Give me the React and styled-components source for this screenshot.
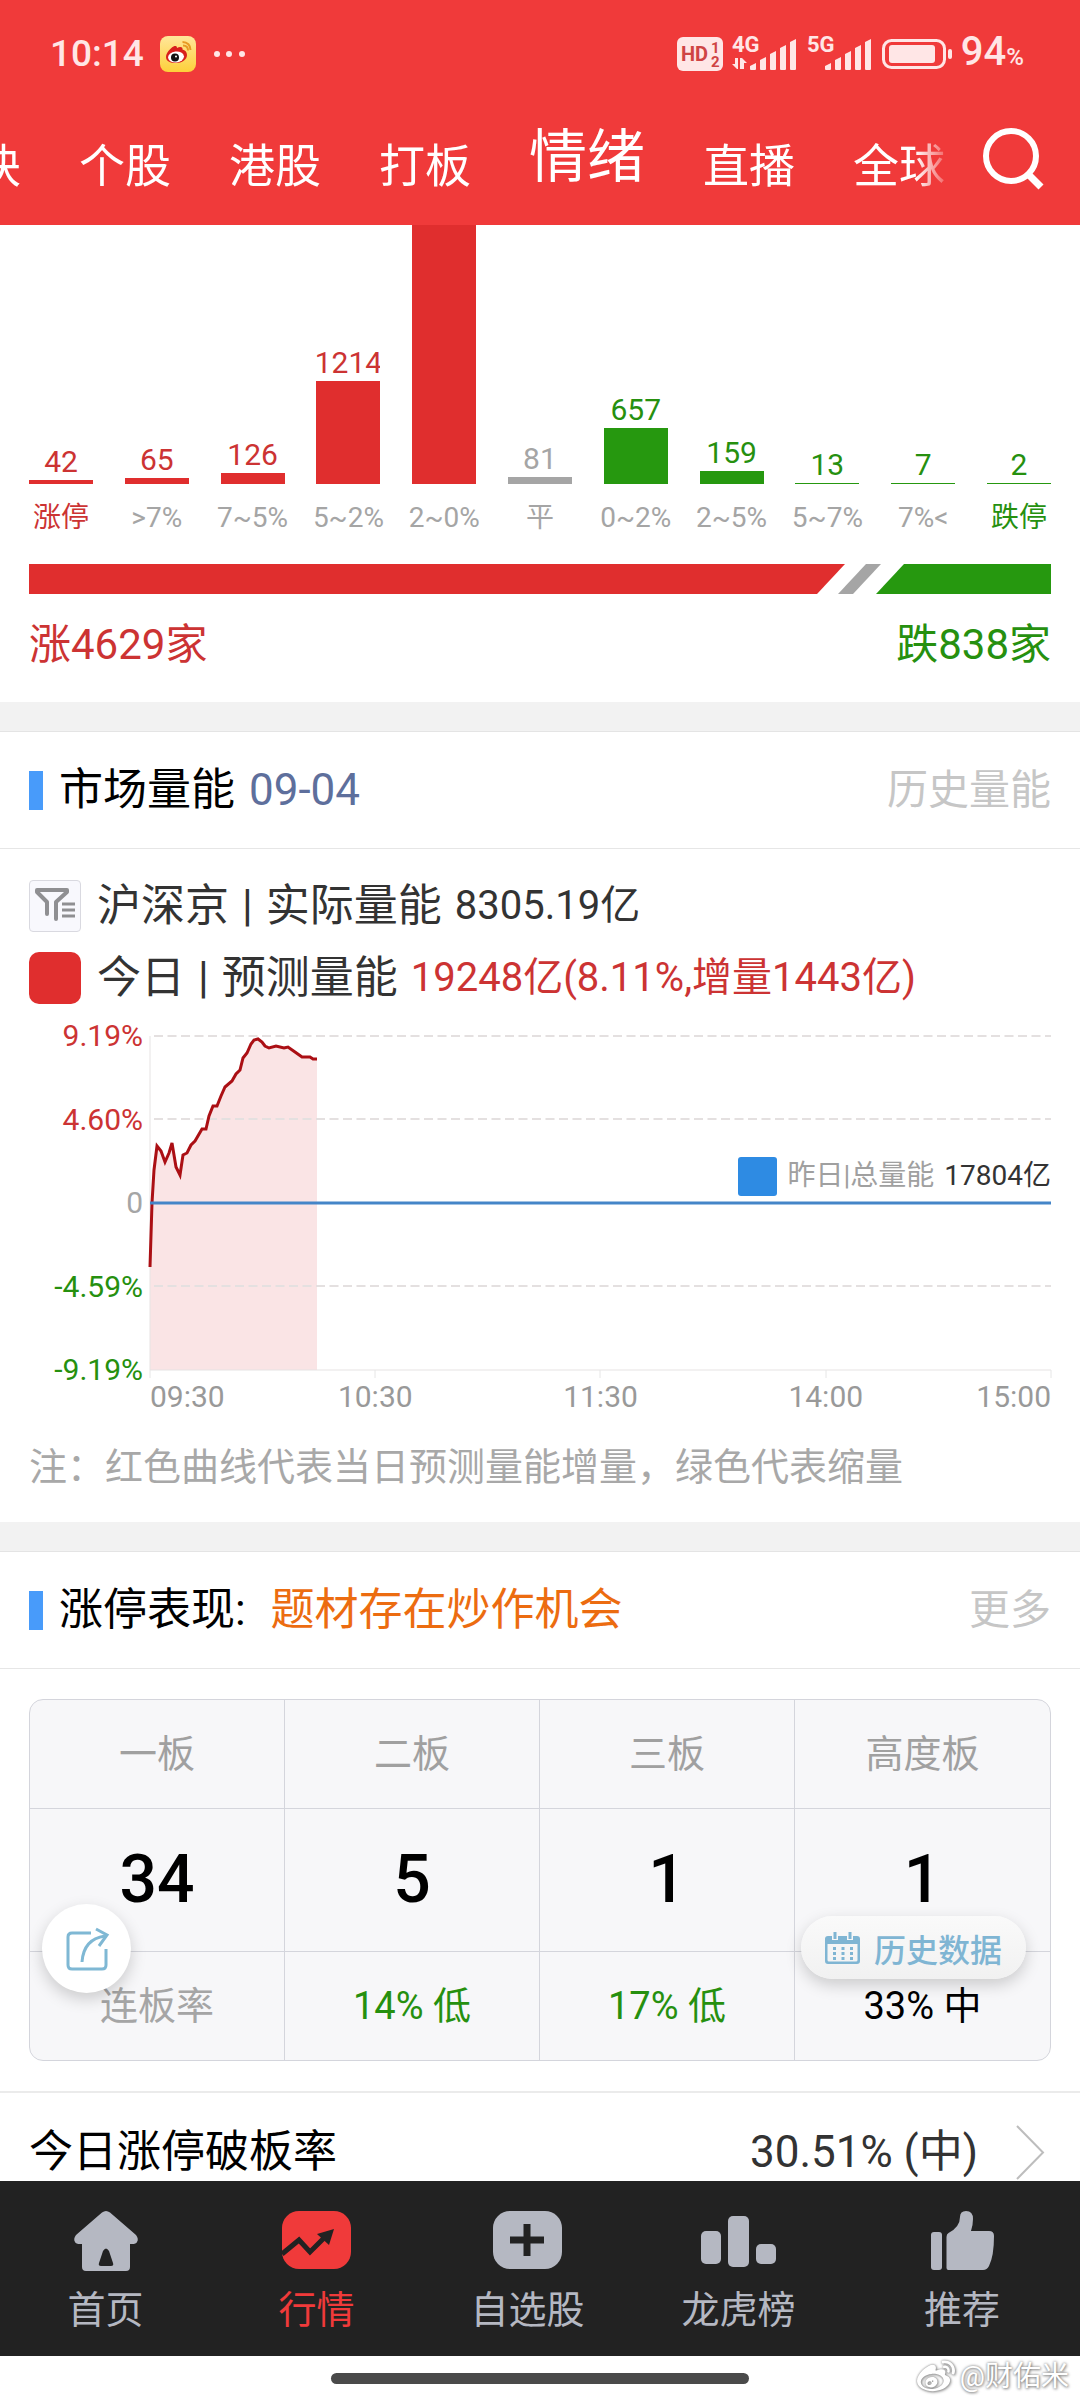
import styled, { createGlobalStyle, css } from "styled-components";
import { FaWeibo } from "react-icons/fa";

const RED = "#e02e2e";
const GREEN = "#26980f";
const GREY = "#a5a5a5";

const GlobalStyle = createGlobalStyle`
  * {
    box-sizing: border-box;
  }
  body {
    margin: 0;
    background: #fff;
    font-family: Roboto, "Noto Sans CJK SC", sans-serif;
    color: #000;
  }
  a {
    color: inherit;
    text-decoration: none;
  }
  button {
    border: none;
    padding: 0;
    background: none;
    font: inherit;
    cursor: pointer;
  }
  svg {
    display: block;
    flex: none;
    overflow: visible;
  }
`;

const toneColor = {
  up: "#cc3333",
  down: "#26900f",
  flat: GREY,
  plain: "#000",
};

const Screen = styled.div`
  height: 100vh;
  display: flex;
  flex-direction: column;
  overflow: hidden;
`;

/* ---------- header ---------- */

const Header = styled.header`
  flex: none;
  background: #f03a3a;
  color: #fff;
`;

const StatusBar = styled.div`
  height: 108px;
  padding: 0 56px 0 50px;
  display: flex;
  align-items: center;
  justify-content: space-between;
  color: #ffe6e6;
`;

const StatusGroup = styled.div`
  display: flex;
  align-items: center;
  gap: ${({ $gap }) => $gap}px;
`;

const Clock = styled.span`
  font-size: 37px;
  line-height: 48px;
  font-weight: 500;
`;

const BatteryLevel = styled.span`
  font-size: 40px;
  line-height: 48px;
  font-weight: 500;

  small {
    font-size: 24px;
  }
`;

const StatusLabel = styled.text`
  font-family: Roboto, sans-serif;
  font-weight: 700;
`;

const TabRow = styled.div`
  height: 117px;
  padding: 0 36px 26px 0;
  display: flex;
  align-items: flex-end;
  gap: 28px;
`;

const TabStrip = styled.nav`
  flex: 1;
  min-width: 0;
  overflow: hidden;
  mask-image: linear-gradient(to right, #000 calc(100% - 40px), transparent);
`;

const TabList = styled.div`
  display: flex;
  align-items: flex-end;
  gap: 58px;
  margin-left: -71px;
`;

const Tab = styled.a`
  flex: none;
  font-size: ${({ $active }) => ($active ? 58 : 46)}px;
  line-height: ${({ $active }) => ($active ? 84 : 66)}px;
`;

const SearchButton = styled.button`
  margin-bottom: 10px;
`;

/* ---------- shared section parts ---------- */

const Main = styled.main`
  flex: 1;
  min-height: 0;
  overflow: hidden;
`;

const Band = styled.div`
  height: 30px;
  background: #f2f2f2;
  border-bottom: 1px solid #e4e4e4;
`;

const SectionHeader = styled.div`
  height: 117px;
  padding: 0 29px;
  display: flex;
  align-items: center;
  gap: 14px;
  border-bottom: 1px solid #e6e6e6;
  font-size: 44px;
  line-height: 64px;

  &::before {
    content: "";
    width: 14px;
    height: 39px;
    margin-right: 2px;
    background: #489bfa;
  }
`;

const SectionTitle = styled.h2`
  margin: 0;
  font-size: inherit;
  font-weight: 400;
`;

const SectionNote = styled.span`
  color: ${({ $color }) => $color};
`;

const MoreLink = styled.a`
  margin-left: auto;
  font-size: 41px;
  color: #c6c6c6;
`;

/* ---------- rise / fall distribution ---------- */

const Distribution = styled.section`
  padding: 0 29px 25px;
`;

const Columns = styled.div`
  display: flex;
  justify-content: space-between;
`;

const Column = styled.div`
  width: 64px;
  display: flex;
  flex-direction: column;
  align-items: center;
  white-space: nowrap;
`;

const ColumnPlot = styled.div`
  width: 100%;
  height: 259px;
  display: flex;
  flex-direction: column;
  justify-content: flex-end;
  align-items: center;
  overflow: hidden;
`;

const ColumnCount = styled.span`
  font-size: 30px;
  line-height: 36px;
  color: ${({ $tone }) => toneColor[$tone]};
`;

const ColumnBar = styled.div`
  flex: none;
  width: 100%;
  background: ${({ $tone }) => ({ up: RED, down: GREEN, flat: GREY })[$tone]};
`;

const ColumnName = styled.span`
  margin-top: 12px;
  font-size: 28px;
  line-height: 44px;
  color: ${({ $tone }) => toneColor[$tone]};
`;

const RatioBar = styled.div`
  height: 30px;
  margin-top: 24px;
  display: flex;
`;

const RatioUp = styled.div`
  flex: 816;
  background: ${RED};
  clip-path: polygon(0 0, 100% 0, calc(100% - 28px) 100%, 0 100%);
`;

const RatioFlat = styled.div`
  width: 43px;
  margin: 0 -5px 0 -7px;
  background: ${GREY};
  clip-path: polygon(28px 0, 100% 0, calc(100% - 28px) 100%, 0 100%);
`;

const RatioDown = styled.div`
  flex: 175;
  background: ${GREEN};
  clip-path: polygon(28px 0, 100% 0, 100% 100%, 0 100%);
`;

const Totals = styled.div`
  margin-top: 19px;
  display: flex;
  justify-content: space-between;
  font-size: 42px;
  line-height: 64px;
`;

const Total = styled.span`
  color: ${({ $tone }) => toneColor[$tone]};
`;

/* ---------- market volume ---------- */

const Volume = styled.section`
  padding: 25px 29px 27px;
`;

const VolumeRows = styled.div`
  display: flex;
  flex-direction: column;
  gap: 8px;
`;

const VolumeRow = styled.div`
  display: flex;
  align-items: center;
  gap: 13px;
  font-size: 44px;
  line-height: 64px;
  color: #333;
`;

const VolumeValue = styled.span`
  font-size: 40px;
  color: ${({ $tone }) => ($tone ? toneColor[$tone] : "#333")};
`;

const iconBox = css`
  flex: none;
  width: 52px;
  height: 52px;
  margin-right: 3px;
`;

const FilterButton = styled.button`
  ${iconBox}
  border: 1px solid #d9d9e0;
  border-radius: 4px;
  background: #f8f8fd;
`;

const TodaySwatch = styled.span`
  ${iconBox}
  border-radius: 10px;
  background: ${RED};
`;

const VolumeChart = styled.div`
  margin-top: 26px;
  display: grid;
  grid-template-columns: 114px 1fr;
  column-gap: 7px;
`;

const YAxis = styled.div`
  margin: -18px 0;
  display: flex;
  flex-direction: column;
  justify-content: space-between;
  align-items: flex-end;
  font-size: 30px;
  line-height: 36px;
`;

const YLabel = styled.span`
  color: ${({ $tone }) => toneColor[$tone]};
`;

const Plot = styled.div`
  position: relative;
  height: 334px;

  svg {
    width: 100%;
    height: 100%;
  }
`;

const Legend = styled.div`
  position: absolute;
  right: 0;
  top: 118px;
  display: flex;
  align-items: center;
  font-size: 28px;
  line-height: 44px;
  color: #a0a0a0;
`;

const LegendSwatch = styled.span`
  width: 39px;
  height: 39px;
  margin-right: 10px;
  border-radius: 3px;
  background: #2e8be3;
`;

const LegendValue = styled.span`
  margin-left: 10px;
  color: #333;
`;

const XAxis = styled.div`
  grid-column: 2;
  margin-top: 9px;
  display: grid;
  grid-template-columns: 1fr 2fr 2fr 2fr 1fr;
  font-size: 30px;
  line-height: 36px;
  color: #999;
  text-align: center;

  span:first-child {
    text-align: left;
  }
  span:last-child {
    text-align: right;
  }
`;

const Footnote = styled.p`
  margin: 24px 0 0;
  font-size: 38px;
  line-height: 56px;
  color: #a8a8a8;
`;

/* ---------- limit-up table ---------- */

const Boards = styled.section`
  position: relative;
  padding: 30px 29px;
`;

const BoardFrame = styled.div`
  border: 1px solid #d4d5dc;
  border-radius: 14px;
  background: #f7f7f9;
  overflow: hidden;
`;

const BoardTable = styled.table`
  width: 100%;
  table-layout: fixed;
  border-spacing: 0;
  font-size: 38px;
  line-height: 56px;
  text-align: center;

  th,
  td {
    padding: 0;
    font-weight: 400;
    border-right: 1px solid #d4d5dc;
    border-bottom: 1px solid #d4d5dc;
  }
  tr > :last-child {
    border-right: none;
  }
  tbody tr:last-child > * {
    border-bottom: none;
  }
`;

const BoardName = styled.th`
  height: 109px;
  color: #a0a0a0;
`;

const BoardCount = styled.td`
  height: 143px;
  font-size: 66px;
  line-height: 80px;

  span {
    font-weight: 500;
  }
`;

const BoardRate = styled.td`
  height: 108px;
  color: ${({ $tone }) => toneColor[$tone]};
`;

const floating = css`
  position: absolute;
  display: flex;
  align-items: center;
  justify-content: center;
  box-shadow: 0 6px 16px rgba(0, 0, 0, 0.18);
`;

const ShareButton = styled.button`
  ${floating}
  left: 42px;
  bottom: 98px;
  width: 89px;
  height: 89px;
  border-radius: 50%;
  background: #fff;
`;

const HistoryButton = styled.button`
  ${floating}
  right: 54px;
  bottom: 112px;
  height: 63px;
  padding: 0 24px;
  gap: 14px;
  border-radius: 32px;
  background: linear-gradient(#fafafa, #f1f1f1);
  font-size: 32px;
  font-weight: 500;
  color: #7fb5d3;
`;

const RateRow = styled.a`
  height: 120px;
  padding: 0 35px 0 29px;
  display: flex;
  align-items: center;
  border-top: 2px solid #ebebeb;
  font-size: 44px;
  line-height: 56px;
`;

const RateValue = styled.span`
  margin-left: auto;
  margin-right: 38px;
  color: #333;
`;

/* ---------- bottom ---------- */

const BottomNav = styled.nav`
  flex: none;
  height: 175px;
  padding-top: 30px;
  display: grid;
  grid-template-columns: 211fr 211fr 211fr 211fr 236fr;
  background: #222;
`;

const NavItem = styled.a`
  display: flex;
  flex-direction: column;
  align-items: center;
  gap: 11px;
  font-size: 38px;
  line-height: 56px;
  color: ${({ $active }) => ($active ? "#f03a3a" : "#b5b8c2")};
`;

const GestureArea = styled.footer`
  position: relative;
  flex: none;
  height: 44px;
  display: flex;
  align-items: center;
  justify-content: center;
  background: #fff;
`;

const GestureBar = styled.div`
  width: 418px;
  height: 11px;
  border-radius: 6px;
  background: #4a4a4a;
`;

const Watermark = styled.div`
  position: absolute;
  right: 11px;
  top: 0;
  display: flex;
  align-items: center;
  gap: 5px;
  font-size: 28px;
  line-height: 42px;
  color: #fff;
  text-shadow: 0 0 3px #777, 1px 1px 3px #999;

  svg {
    filter: drop-shadow(0 0 1px #888) drop-shadow(1px 1px 1px #aaa);
  }
`;

/* ---------- icons ---------- */

function WeiboBadge() {
  return (
    <svg width="36" height="36" viewBox="0 0 36 36">
      <defs>
        <linearGradient id="badge" x1="0" y1="0" x2="0" y2="1">
          <stop offset="0" stopColor="#ffe79a" />
          <stop offset="1" stopColor="#fdd03a" />
        </linearGradient>
      </defs>
      <rect width="36" height="36" rx="8" fill="url(#badge)" />
      <path d="M6 21c0-4 4-8.500 7.500-10.500 2-1 3.500-.5 3.500 1.500 2.500-1.500 6-1.500 5.500 1.500 2.500.5 4.500 2.500 4.500 5.500 0 4.500-5 8-11 8S6 25 6 21z" fill="#d8201c" />
      <ellipse cx="16" cy="21" rx="8" ry="5.500" fill="#fff" transform="rotate(-6 16 21)" />
      <circle cx="15" cy="21.500" r="4" fill="#111" />
      <circle cx="16" cy="20.500" r="1" fill="#fff" />
      <path d="M23 9.500c3 0 5 2 5 5M22.500 6c5 0 8 3.500 8 8" fill="none" stroke="#e79a24" strokeWidth="2" />
    </svg>
  );
}

function HdIcon() {
  return (
    <svg width="46" height="34" viewBox="0 0 46 34">
      <rect width="46" height="34" rx="6" fill="currentColor" />
      <g fill="#cf4444">
        <StatusLabel x="4" y="24" fontSize="20">HD</StatusLabel>
        <StatusLabel x="34" y="16" fontSize="15">1</StatusLabel>
        <StatusLabel x="34" y="30" fontSize="15">2</StatusLabel>
      </g>
    </svg>
  );
}

function Signal({ label, arrows }) {
  return (
    <svg width="66" height="34" viewBox="0 0 66 34" fill="currentColor">
      <StatusLabel x="0" y="15" fontSize="22">{label}</StatusLabel>
      {arrows && <path d="M3 21h3v11H5l-5-5h3zM8 32V21h2l5 5h-3v6z" />}
      {[7, 13, 19, 25, 31].map((h, i) => (
        <path key={h} d={`M${18 + i * 10} 33v${3 - h}l6 -3v${h - 1}q0 1 -1 1h-4q-1 0 -1 -1z`} />
      ))}
    </svg>
  );
}

function Battery() {
  return (
    <svg width="70" height="30" viewBox="0 0 70 30">
      <rect x="1.500" y="1.500" width="61" height="27" rx="8" fill="none" stroke="currentColor" strokeWidth="3" />
      <rect x="7" y="6" width="46" height="18" rx="3" fill="currentColor" />
      <rect x="66" y="10" width="4" height="10" rx="2" fill="currentColor" />
    </svg>
  );
}

function SearchIcon() {
  return (
    <svg width="61" height="61" viewBox="0 0 61 61" fill="none" stroke="#fff" strokeWidth="6">
      <circle cx="28" cy="28" r="25" />
      <path d="M45 46l13 13" strokeWidth="7" />
    </svg>
  );
}

function FilterIcon() {
  return (
    <svg width="50" height="50" viewBox="0 0 50 50" fill="none" stroke="#8f8f92" strokeWidth="4">
      <path d="M17 33V21L7 11V9h30v2L26 21v17" strokeLinejoin="round" strokeLinecap="round" />
      <path d="M32 23h13M32 29h13M32 35h13" strokeWidth="3" />
    </svg>
  );
}

function ShareIcon() {
  return (
    <svg width="42" height="44" viewBox="0 0 42 44" fill="none" stroke="#7fb8d4" strokeWidth="3">
      <path d="M25 6H6q-4 0-4 4v28q0 4 4 4h30q4 0 4-4V22" />
      <path d="M16 35C17 20 25 11 39 9" />
      <path d="M30 2l11 6-8 11" />
    </svg>
  );
}

function CalendarIcon() {
  return (
    <svg width="35" height="32" viewBox="0 0 35 32">
      <path d="M3 4h29q3 0 3 3v22q0 3-3 3H3q-3 0-3-3V7q0-3 3-3zM2.500 12v16q0 1.500 1.500 1.500h27q1.500 0 1.500-1.500V12z" fill="currentColor" fillRule="evenodd" />
      <path d="M10 0v8M25 0v8" stroke="#f7f7f7" strokeWidth="6" />
      <path d="M10 0v7M25 0v7" stroke="currentColor" strokeWidth="3" />
      <path d="M8 16.500h20M8 21.500h20M8 26.500h20" stroke="currentColor" strokeWidth="3" strokeDasharray="3 5.500" />
    </svg>
  );
}

function HomeIcon() {
  return (
    <svg width="64" height="60" viewBox="0 0 64 60" fill="currentColor" fillRule="evenodd">
      <path d="M28 1.500q4-3 8 0L62 24q3 4 1 7-1 2-5 2h-2v23q0 4-4 4H12q-4 0-4-4V33H6q-4 0-5-2-2-3 1-7zM29 40l-4 12q-1 3 2 3h10q3 0 2-3l-4-12q-3-5-6 0z" />
    </svg>
  );
}

function MarketIcon() {
  return (
    <svg width="69" height="60" viewBox="0 0 69 60">
      <rect width="69" height="58" rx="17" fill="currentColor" />
      <path d="M0 43l17-14 11 12 14-14" fill="none" stroke="#222" strokeWidth="5" />
      <path d="M52 18L35 23l12 11z" fill="#222" />
    </svg>
  );
}

function AddIcon() {
  return (
    <svg width="69" height="60" viewBox="0 0 69 60">
      <rect width="69" height="58" rx="17" fill="currentColor" />
      <path d="M17 29h34M34 13v32" stroke="#222" strokeWidth="7" />
    </svg>
  );
}

function RankIcon() {
  return (
    <svg width="75" height="60" viewBox="0 0 75 60" fill="currentColor">
      <rect x="0" y="20" width="20" height="33" rx="5" />
      <rect x="27" y="5" width="21" height="51" rx="5" />
      <rect x="55" y="33" width="20" height="20" rx="5" />
    </svg>
  );
}

function ThumbIcon() {
  return (
    <svg width="63" height="60" viewBox="0 0 63 60" fill="currentColor">
      <rect x="0" y="21" width="11" height="38" rx="3" />
      <path d="M15.500 26q0-3 2-4Q29 16 29 6q0-6 6-6 7 0 7 8 0 6-2 12h18q5 0 5 5 0 20-5 30-2 4-6 4H17.500q-2 0-2-2z" />
    </svg>
  );
}

function Chevron() {
  return (
    <svg width="29" height="55" viewBox="0 0 29 55" fill="none" stroke="#bdbdbd" strokeWidth="2">
      <path d="M1 1l26 26.500L1 54" />
    </svg>
  );
}

/* ---------- data ---------- */

const tabs = ["板块", "个股", "港股", "打板", "情绪", "直播", "全球"];

const columns = [
  { name: "涨停", count: 42, height: 4, tone: "up", strong: true },
  { name: ">7%", count: 65, height: 6, tone: "up" },
  { name: "7~5%", count: 126, height: 11, tone: "up" },
  { name: "5~2%", count: 1214, height: 103, tone: "up" },
  { name: "2~0%", height: 270, tone: "up" },
  { name: "平", count: 81, height: 7, tone: "flat" },
  { name: "0~2%", count: 657, height: 56, tone: "down" },
  { name: "2~5%", count: 159, height: 13, tone: "down" },
  { name: "5~7%", count: 13, height: 1, tone: "down" },
  { name: "7%<", count: 7, height: 1, tone: "down" },
  { name: "跌停", count: 2, height: 1, tone: "down", strong: true },
];

const yLabels = [
  { text: "9.19%", tone: "up" },
  { text: "4.60%", tone: "up" },
  { text: "0", tone: "flat" },
  { text: "-4.59%", tone: "down" },
  { text: "-9.19%", tone: "down" },
];

const times = ["09:30", "10:30", "11:30", "14:00", "15:00"];

// predicted volume change, in plot coordinates (901 x 334)
const trend = [
  [0, 231], [2, 167], [4, 134], [7, 110], [11, 115], [15, 126], [19, 117],
  [22, 107], [26, 131], [30, 139], [33, 119], [37, 117], [41, 109], [45, 105],
  [52, 93], [56, 93], [59, 80], [63, 70], [67, 70], [71, 60], [75, 51],
  [82, 45], [86, 38], [90, 34], [93, 22], [97, 17], [101, 8], [104, 4],
  [108, 3], [112, 6], [115, 10], [119, 12], [126, 10], [134, 12], [138, 11],
  [145, 16], [152, 21], [160, 21], [163, 23], [167, 23],
];

const boards = [
  { name: "一板", count: 34, rate: "连板率", tone: "flat" },
  { name: "二板", count: 5, rate: "14% 低", tone: "down" },
  { name: "三板", count: 1, rate: "17% 低", tone: "down" },
  { name: "高度板", count: 1, rate: "33% 中", tone: "plain" },
];

const navItems = [
  { name: "首页", Icon: HomeIcon },
  { name: "行情", Icon: MarketIcon, active: true },
  { name: "自选股", Icon: AddIcon },
  { name: "龙虎榜", Icon: RankIcon },
  { name: "推荐", Icon: ThumbIcon },
];

function TrendPlot() {
  const line = trend.map((p) => p.join(",")).join(" ");
  return (
    <svg viewBox="0 0 901 334" preserveAspectRatio="none">
      <polygon points={`0,334 ${line} 167,334`} fill="#df3d46" fillOpacity="0.14" />
      <g stroke="#e4e0e0" strokeWidth="2" strokeDasharray="9 4.500">
        {[0, 83, 250].map((y) => (
          <line key={y} x1="4" x2="901" y1={y} y2={y} />
        ))}
      </g>
      <path d="M0 0V334H901" fill="none" stroke="#e6e3e3" strokeWidth="1" />
      {[0, 225, 450, 676, 901].map((x) => (
        <line key={x} x1={x} x2={x} y1="334" y2="342" stroke="#e6e6e6" />
      ))}
      <polyline points={line} fill="none" stroke="#ab0f14" strokeWidth="3" />
      <line x1="0" x2="901" y1="167" y2="167" stroke="#4485c8" strokeWidth="3" />
    </svg>
  );
}

export default function App() {
  return (
    <Screen lang="zh-CN">
      <GlobalStyle />
      <Header>
        <StatusBar>
          <StatusGroup $gap={16}>
            <Clock>10:14</Clock>
            <WeiboBadge />
            <svg width="34" height="8" viewBox="0 0 34 8" fill="currentColor">
              <circle cx="5" cy="4" r="3" />
              <circle cx="17" cy="4" r="3" />
              <circle cx="30" cy="4" r="3" />
            </svg>
          </StatusGroup>
          <StatusGroup $gap={9}>
            <HdIcon />
            <Signal label="4G" arrows />
            <Signal label="5G" />
            <Battery />
            <BatteryLevel>94<small>%</small></BatteryLevel>
          </StatusGroup>
        </StatusBar>
        <TabRow>
          <TabStrip>
            <TabList>
              {tabs.map((t) => (
                <Tab key={t} href="#" $active={t === "情绪"}>{t}</Tab>
              ))}
            </TabList>
          </TabStrip>
          <SearchButton aria-label="搜索"><SearchIcon /></SearchButton>
        </TabRow>
      </Header>

      <Main>
        <Distribution>
          <Columns>
            {columns.map((c) => (
              <Column key={c.name}>
                <ColumnPlot>
                  {c.count && <ColumnCount $tone={c.tone}>{c.count}</ColumnCount>}
                  <ColumnBar $tone={c.tone} style={{ height: c.height }} />
                </ColumnPlot>
                <ColumnName $tone={c.strong ? c.tone : "flat"}>{c.name}</ColumnName>
              </Column>
            ))}
          </Columns>
          <RatioBar>
            <RatioUp />
            <RatioFlat />
            <RatioDown />
          </RatioBar>
          <Totals>
            <Total $tone="up">涨4629家</Total>
            <Total $tone="down">跌838家</Total>
          </Totals>
        </Distribution>

        <Band />
        <SectionHeader>
          <SectionTitle>市场量能</SectionTitle>
          <SectionNote $color="#5e6f9c">09-04</SectionNote>
          <MoreLink href="#">历史量能</MoreLink>
        </SectionHeader>
        <Volume>
          <VolumeRows>
            <VolumeRow>
              <FilterButton aria-label="筛选"><FilterIcon /></FilterButton>
              <span>沪深京</span>
              <span>|</span>
              <span>实际量能</span>
              <VolumeValue>8305.19亿</VolumeValue>
            </VolumeRow>
            <VolumeRow>
              <TodaySwatch />
              <span>今日</span>
              <span>|</span>
              <span>预测量能</span>
              <VolumeValue $tone="up">19248亿(8.11%,增量1443亿)</VolumeValue>
            </VolumeRow>
          </VolumeRows>
          <VolumeChart>
            <YAxis>
              {yLabels.map((l) => (
                <YLabel key={l.text} $tone={l.tone}>{l.text}</YLabel>
              ))}
            </YAxis>
            <Plot>
              <TrendPlot />
              <Legend>
                <LegendSwatch />
                昨日|总量能
                <LegendValue>17804亿</LegendValue>
              </Legend>
            </Plot>
            <XAxis>
              {times.map((t) => (
                <span key={t}>{t}</span>
              ))}
            </XAxis>
          </VolumeChart>
          <Footnote>注：红色曲线代表当日预测量能增量，绿色代表缩量</Footnote>
        </Volume>

        <Band />
        <SectionHeader>
          <SectionTitle>涨停表现:&nbsp;</SectionTitle>
          <SectionNote $color="#ec6c10">题材存在炒作机会</SectionNote>
          <MoreLink href="#">更多</MoreLink>
        </SectionHeader>
        <Boards>
          <BoardFrame>
            <BoardTable>
              <thead>
                <tr>
                  {boards.map((b) => (
                    <BoardName key={b.name} scope="col">{b.name}</BoardName>
                  ))}
                </tr>
              </thead>
              <tbody>
                <tr>
                  {boards.map((b) => (
                    <BoardCount key={b.name}><span>{b.count}</span></BoardCount>
                  ))}
                </tr>
                <tr>
                  {boards.map((b) => (
                    <BoardRate key={b.name} $tone={b.tone}>{b.rate}</BoardRate>
                  ))}
                </tr>
              </tbody>
            </BoardTable>
          </BoardFrame>
          <ShareButton aria-label="分享"><ShareIcon /></ShareButton>
          <HistoryButton><CalendarIcon />历史数据</HistoryButton>
        </Boards>
        <RateRow href="#">
          <span>今日涨停破板率</span>
          <RateValue>30.51% (中)</RateValue>
          <Chevron />
        </RateRow>
      </Main>

      <BottomNav>
        {navItems.map(({ name, Icon, active }) => (
          <NavItem key={name} href="#" $active={active}>
            <Icon />
            {name}
          </NavItem>
        ))}
      </BottomNav>
      <GestureArea>
        <GestureBar />
        <Watermark>
          <FaWeibo size={38} />
          @财佑米
        </Watermark>
      </GestureArea>
    </Screen>
  );
}
